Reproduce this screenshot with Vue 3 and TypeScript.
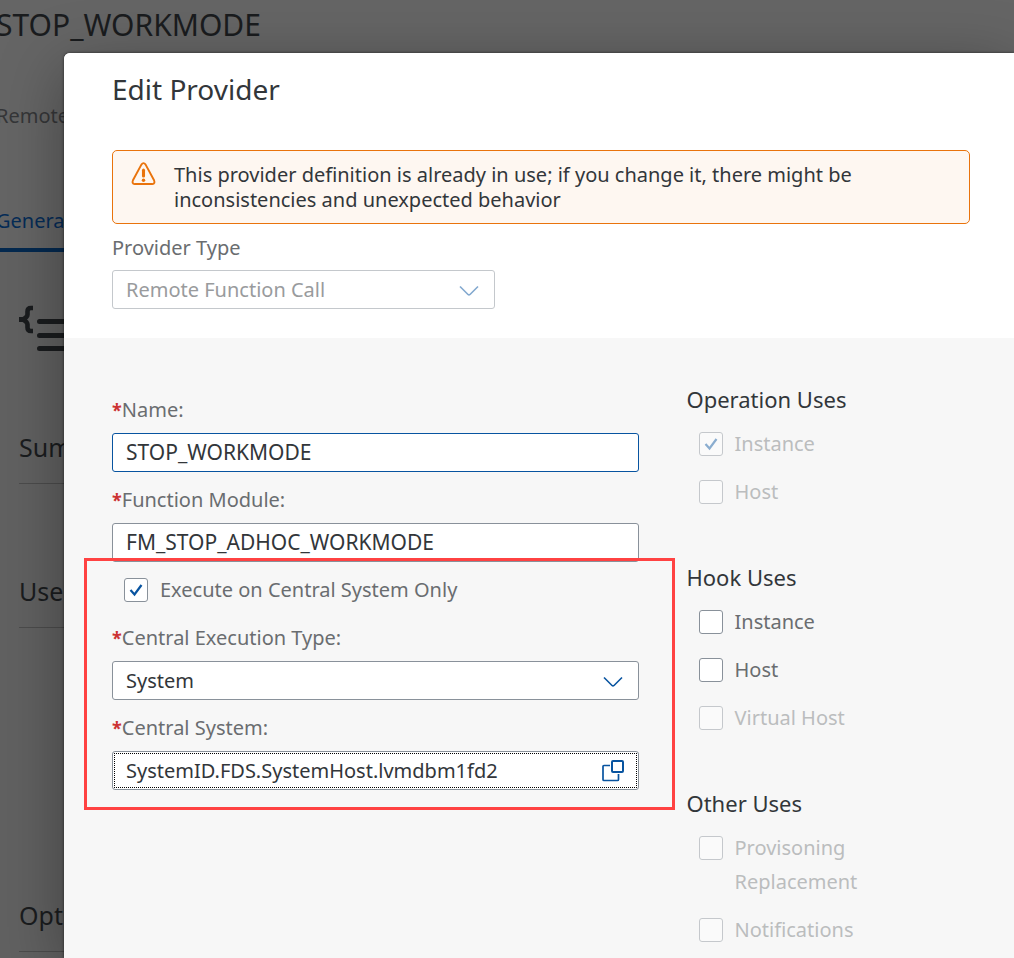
<script setup lang="ts">
import { ref, reactive } from 'vue'

interface UseOption {
  id: string
  label: string
  checked: boolean
  disabled: boolean
}

interface UseGroup {
  title: string
  options: UseOption[]
}

const providerType = ref('Remote Function Call')
const name = ref('STOP_WORKMODE')
const functionModule = ref('FM_STOP_ADHOC_WORKMODE')
const centralOnly = ref(true)
const executionType = ref('System')
const centralSystem = ref('SystemID.FDS.SystemHost.lvmdbm1fd2')

const groups = reactive<UseGroup[]>([
  {
    title: 'Operation Uses',
    options: [
      { id: 'op-instance', label: 'Instance', checked: true, disabled: true },
      { id: 'op-host', label: 'Host', checked: false, disabled: true },
    ],
  },
  {
    title: 'Hook Uses',
    options: [
      { id: 'hook-instance', label: 'Instance', checked: false, disabled: false },
      { id: 'hook-host', label: 'Host', checked: false, disabled: false },
      { id: 'hook-virtual', label: 'Virtual Host', checked: false, disabled: true },
    ],
  },
  {
    title: 'Other Uses',
    options: [
      { id: 'other-provisioning', label: 'Provisoning Replacement', checked: false, disabled: true },
      { id: 'other-notifications', label: 'Notifications', checked: false, disabled: true },
    ],
  },
])
</script>

<template>
  <div class="app">
    <div class="page">
      <header class="page-header">
        <h1 class="page-title">STOP_WORKMODE</h1>
        <p class="page-subtitle">Remote</p>
        <nav class="tabs"><a class="tab" href="#general">General</a></nav>
      </header>
      <main class="page-body">
        <svg class="page-icon" width="60" height="48" viewBox="0 0 60 48" aria-hidden="true">
          <path d="M14 4H12Q8.500 4 8.500 7.500V10.500Q8.500 13 4 15.500Q8.500 18 8.500 20.500V23.500Q8.500 27 12 27H14" fill="none" stroke="currentColor" stroke-width="4.600" />
          <path d="M0 13H5V18H0Z" fill="currentColor" />
          <path d="M20.500 17.500H58M20.500 31.500H58M20.500 44.500H58" fill="none" stroke="currentColor" stroke-width="5" stroke-linecap="round" />
        </svg>
        <h2 class="section-title">Summary</h2>
        <h2 class="section-title section-uses">Uses</h2>
        <h2 class="section-title section-options">Options</h2>
      </main>
    </div>

    <div class="dialog" role="dialog" aria-labelledby="dialog-title">
      <section class="dialog-top">
        <h2 id="dialog-title" class="dialog-title">Edit Provider</h2>
        <div class="strip" role="alert">
          <svg class="strip-icon" width="25" height="24" viewBox="0 0 26 25" aria-hidden="true">
            <path d="M10.800 2.700Q13 -0.300 15.200 2.700L24 19Q25.400 22.500 22.200 23H3.800Q0.600 22.500 2 19Z" fill="none" stroke="currentColor" stroke-width="2" stroke-linejoin="round" />
            <path d="M13 8.500V14.500" stroke="currentColor" stroke-width="3.200" stroke-linecap="round" />
            <circle cx="13" cy="19" r="1.800" fill="currentColor" />
          </svg>
          <p class="strip-text">This provider definition is already in use; if you change it, there might be inconsistencies and unexpected behavior</p>
        </div>
        <div class="type-field">
          <label class="type-label" for="provider-type">Provider Type</label>
          <div class="control">
            <select id="provider-type" v-model="providerType" class="box" disabled>
              <option>Remote Function Call</option>
            </select>
            <svg class="chevron faded" width="20" height="12" viewBox="0 0 20 12" aria-hidden="true">
              <path d="M1 1.500L9 9.500Q10 10.300 11 9.500L19 1.500" fill="none" stroke="currentColor" stroke-width="1.600" />
            </svg>
          </div>
        </div>
      </section>

      <form class="form" @submit.prevent>
        <div class="fields">
          <div class="field">
            <label class="label" for="name"><span class="star">*</span>Name:</label>
            <input id="name" v-model="name" class="box technical active" type="text" />
          </div>
          <div class="field">
            <label class="label" for="module"><span class="star">*</span>Function Module:</label>
            <input id="module" v-model="functionModule" class="box technical" type="text" />
          </div>
          <div class="central">
            <label class="check central-check" for="central-only">
              <span class="tick">
                <input id="central-only" v-model="centralOnly" type="checkbox" />
                <svg v-if="centralOnly" width="14" height="14" viewBox="0 0 14 14" aria-hidden="true">
                  <path d="M1.500 7L5.500 11.500L12.500 2" fill="none" stroke="currentColor" stroke-width="2.200" />
                </svg>
              </span>
              <span class="check-text">Execute on Central System Only</span>
            </label>
            <div class="field">
              <label class="label" for="exec-type"><span class="star">*</span>Central Execution Type:</label>
              <div class="control">
                <select id="exec-type" v-model="executionType" class="box">
                  <option>System</option>
                </select>
                <svg class="chevron" width="20" height="12" viewBox="0 0 20 12" aria-hidden="true">
                  <path d="M1 1.500L9 9.500Q10 10.300 11 9.500L19 1.500" fill="none" stroke="currentColor" stroke-width="1.600" />
                </svg>
              </div>
            </div>
            <div class="field">
              <label class="label" for="central-system"><span class="star">*</span>Central System:</label>
              <div class="control dotted">
                <input id="central-system" v-model="centralSystem" class="box" type="text" />
                <button class="help" type="button" aria-label="Select central system">
                  <svg width="22" height="22" viewBox="0 0 22 22" aria-hidden="true">
                    <rect x="10" y="1" width="11" height="11" rx="1" fill="none" stroke="currentColor" stroke-width="2" />
                    <path d="M8 5.500H2Q1 5.500 1 6.500V19.500Q1 20.500 2 20.500H15.500Q16.500 20.500 16.500 19.500V14" fill="none" stroke="currentColor" stroke-width="1.700" />
                  </svg>
                </button>
              </div>
            </div>
          </div>
        </div>

        <div class="uses">
          <fieldset v-for="group in groups" :key="group.title" class="group">
            <legend class="group-title">{{ group.title }}</legend>
            <label v-for="option in group.options" :key="option.id" class="check" :class="{ disabled: option.disabled }" :for="option.id">
              <span class="tick">
                <input :id="option.id" v-model="option.checked" type="checkbox" :disabled="option.disabled" />
                <svg v-if="option.checked" width="14" height="14" viewBox="0 0 14 14" aria-hidden="true">
                  <path d="M1.500 7L5.500 11.500L12.500 2" fill="none" stroke="currentColor" stroke-width="2.200" />
                </svg>
              </span>
              <span class="check-text">{{ option.label }}</span>
            </label>
          </fieldset>
        </div>
      </form>
    </div>
  </div>
</template>

<style>
body {
  margin: 0;
}
</style>

<style scoped>
.app {
  position: relative;
  min-height: 100vh;
  overflow: hidden;
  background: #616161;
  color: #32363a;
  font-family: "Noto Sans", "Open Sans", sans-serif;
  font-size: 20px;
}

.app * {
  box-sizing: border-box;
}

h1,
h2,
p {
  margin: 0;
  font-weight: 400;
}

.page {
  color: #1a1c1e;
}

.page-header {
  height: 252px;
  display: flex;
  flex-direction: column;
  background: #656565;
}

.page-title {
  margin-left: -4px;
  padding-top: 5px;
  font-size: 30px;
  line-height: 40px;
}

.page-subtitle {
  margin: 57px 0 0 -4px;
  line-height: 28px;
  color: #353638;
}

.tabs {
  display: flex;
  margin-top: auto;
}

.tab {
  width: 100px;
  height: 45px;
  margin-left: -4px;
  border-bottom: 4px solid #04294f;
  line-height: 28px;
  color: #052c57;
  text-decoration: none;
}

.page-body {
  padding: 52px 0 0 19px;
}

.page-icon {
  display: block;
}

.section-title {
  margin-top: 74px;
  height: 58px;
  border-bottom: 1px solid #4c4c4c;
  font-size: 25px;
  line-height: 42px;
}

.section-uses {
  margin-top: 86px;
}

.section-options {
  margin-top: 266px;
}

.dialog {
  position: absolute;
  top: 53px;
  right: 0;
  bottom: 0;
  left: 64px;
  display: flex;
  flex-direction: column;
  border-top-left-radius: 6px;
  background: #f7f7f7;
  box-shadow: 0 0 3px rgba(0, 0, 0, 0.6), 0 16px 64px rgba(0, 0, 0, 0.35);
}

.dialog-top {
  padding: 16px 44px 29px 48px;
  border-top-left-radius: 6px;
  background: #ffffff;
}

.dialog-title {
  font-size: 28px;
  line-height: 40px;
}

.strip {
  display: flex;
  gap: 18px;
  margin-top: 41px;
  padding: 11px 100px 11px 18px;
  border: 1px solid #e9730c;
  border-radius: 5px;
  background: #fef7f1;
}

.strip-icon {
  flex: none;
  color: #e9730c;
}

.strip-text {
  line-height: 25px;
}

.type-field {
  width: 383px;
  max-width: 100%;
}

.type-label {
  display: block;
  padding: 10px 0 8px;
  line-height: 28px;
  color: #6a6d70;
}

.control {
  position: relative;
}

.box {
  display: block;
  width: 100%;
  height: 39px;
  margin: 0;
  padding: 0 48px 1px 13px;
  border: 1px solid #89919a;
  border-radius: 3px;
  outline: none;
  appearance: none;
  background: #ffffff;
  color: #32363a;
  font: inherit;
}

.box.technical {
  font-size: 21px;
}

.box.active {
  border-color: #0854a0;
}

.box:disabled {
  border-color: #c4c8cc;
  color: #999b9d;
  opacity: 1;
}

.chevron {
  position: absolute;
  top: 15px;
  right: 16px;
  color: #0854a0;
  pointer-events: none;
}

.chevron.faded {
  opacity: 0.5;
}

.form {
  display: grid;
  grid-template-columns: minmax(0, 65fr) minmax(0, 35fr);
  gap: 48px;
  padding: 46px 44px 0 48px;
}

.fields {
  display: flex;
  flex-direction: column;
  gap: 14px;
  padding-top: 12px;
}

.field {
  display: flex;
  flex-direction: column;
  gap: 9px;
}

.label {
  line-height: 28px;
  color: #6a6d70;
}

.star {
  color: #cc3333;
  font-size: 18px;
  line-height: 20px;
  font-weight: 700;
}

.central {
  position: relative;
  display: flex;
  flex-direction: column;
  gap: 14px;
  margin-top: -10px;
}

.central::after {
  content: "";
  position: absolute;
  top: -8px;
  right: -36px;
  bottom: -20px;
  left: -28px;
  border: 3px solid #ff4242;
  pointer-events: none;
}

.central-check {
  margin-bottom: -4px;
}

.check {
  display: flex;
  align-items: flex-start;
  gap: 12px;
  padding: 7px 0 7px 12px;
  line-height: 34px;
  color: #6a6d70;
}

.check-text {
  max-width: 320px;
}

.group .check-text {
  max-width: 160px;
}

.tick {
  display: grid;
  flex: none;
  place-items: center;
  margin-top: 5px;
  color: #0854a0;
}

.tick input,
.tick svg {
  grid-area: 1 / 1;
}

.tick input {
  width: 24px;
  height: 24px;
  margin: 0;
  border: 1px solid #89919a;
  border-radius: 3px;
  appearance: none;
  background: #ffffff;
}

.tick svg {
  pointer-events: none;
}

.disabled .check-text {
  color: #bbbdbe;
}

.disabled .tick {
  opacity: 0.45;
}

.dotted::after {
  content: "";
  position: absolute;
  inset: 2px;
  border: 1px dotted #000000;
  pointer-events: none;
}

.help {
  position: absolute;
  top: 9px;
  right: 15px;
  display: block;
  width: 22px;
  height: 22px;
  padding: 0;
  border: 0;
  background: none;
  color: #0854a0;
}

.help svg {
  display: block;
}

.uses {
  display: flex;
  flex-direction: column;
  gap: 46px;
}

.group {
  min-width: 0;
  margin: 0;
  padding: 0;
  border: 0;
}

.group-title {
  padding: 0 0 5px;
  font-size: 22px;
  line-height: 31px;
}
</style>
